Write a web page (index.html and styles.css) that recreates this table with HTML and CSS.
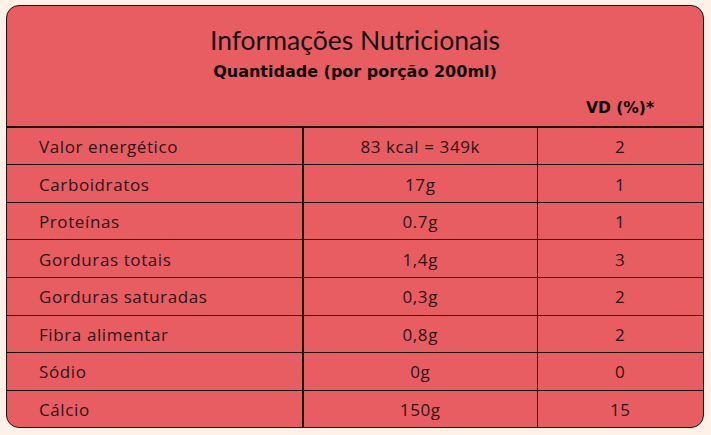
FILE: index.html
```html
<!DOCTYPE html>
<html lang="pt-BR">
<head>
<meta charset="utf-8">
<title>Informações Nutricionais</title>
<link rel="stylesheet" href="styles.css">
</head>
<body>
<div class="card">
  <div class="head">
    <h1 class="title">Informações Nutricionais</h1>
    <p class="subtitle">Quantidade (por porção 200ml)</p>
    <div class="vdrow"><span class="vd">VD (%)*</span></div>
  </div>
  <table class="tbl">
    <colgroup><col class="w1"><col class="w2"><col></colgroup>
    <tr><td class="c1">Valor energético</td><td class="c2">83 kcal = 349k</td><td class="c3">2</td></tr>
    <tr><td class="c1">Carboidratos</td><td class="c2">17g</td><td class="c3">1</td></tr>
    <tr><td class="c1">Proteínas</td><td class="c2">0.7g</td><td class="c3">1</td></tr>
    <tr><td class="c1">Gorduras totais</td><td class="c2">1,4g</td><td class="c3">3</td></tr>
    <tr><td class="c1">Gorduras saturadas</td><td class="c2">0,3g</td><td class="c3">2</td></tr>
    <tr><td class="c1">Fibra alimentar</td><td class="c2">0,8g</td><td class="c3">2</td></tr>
    <tr><td class="c1">Sódio</td><td class="c2">0g</td><td class="c3">0</td></tr>
    <tr><td class="c1">Cálcio</td><td class="c2">150g</td><td class="c3">15</td></tr>
  </table>
</div>
</body>
</html>
```
FILE: styles.css
```css
html, body { margin: 0; padding: 0; }
body {
  background: #fdf1e8;
  padding: 5px 6px;
  font-family: "Open Sans", "Liberation Sans", sans-serif;
}
.card {
  width: 698px;
  height: 423px;
  box-sizing: border-box;
  background: #e85d61;
  border: 1px solid #1a1214;
  border-radius: 13px;
  overflow: hidden;
  display: flex;
  flex-direction: column;
}
.head {
  height: 120px;
  flex: none;
  display: flex;
  flex-direction: column;
  align-items: center;
  border-bottom: 2px solid #111;
}
.title {
  margin: 18px 0 0;
  font-family: "Lato", sans-serif;
  font-weight: 400;
  font-size: 26.5px;
  line-height: 32px;
  color: #141010;
}
.subtitle {
  margin: 6px 0 0;
  font-family: "DejaVu Sans", sans-serif;
  font-weight: 700;
  font-size: 16px;
  line-height: 20px;
  color: #0a0808;
}
.vdrow {
  align-self: stretch;
  display: flex;
  justify-content: flex-end;
  margin-top: 16px;
}
.vd {
  width: 166px;
  text-align: center;
  font-family: "DejaVu Sans", sans-serif;
  font-weight: 700;
  font-size: 15.5px;
  line-height: 20px;
  color: #0a0808;
}
.tbl {
  width: 100%;
  flex: 1;
  border-collapse: collapse;
  table-layout: fixed;
}
.w1 { width: 296px; }
.w2 { width: 234px; }
.tbl td {
  border-top: 1px solid #111;
  font-size: 17px;
  letter-spacing: 0.6px;
  color: #2d1517;
  padding: 1px 0 0;
}
.tbl tr:first-child td { border-top: none; }
.c1 { padding-left: 32px !important; border-right: 2px solid #111; }
.c2 { text-align: center; border-right: 1px solid #111; }
.c3 { text-align: center; }
```
